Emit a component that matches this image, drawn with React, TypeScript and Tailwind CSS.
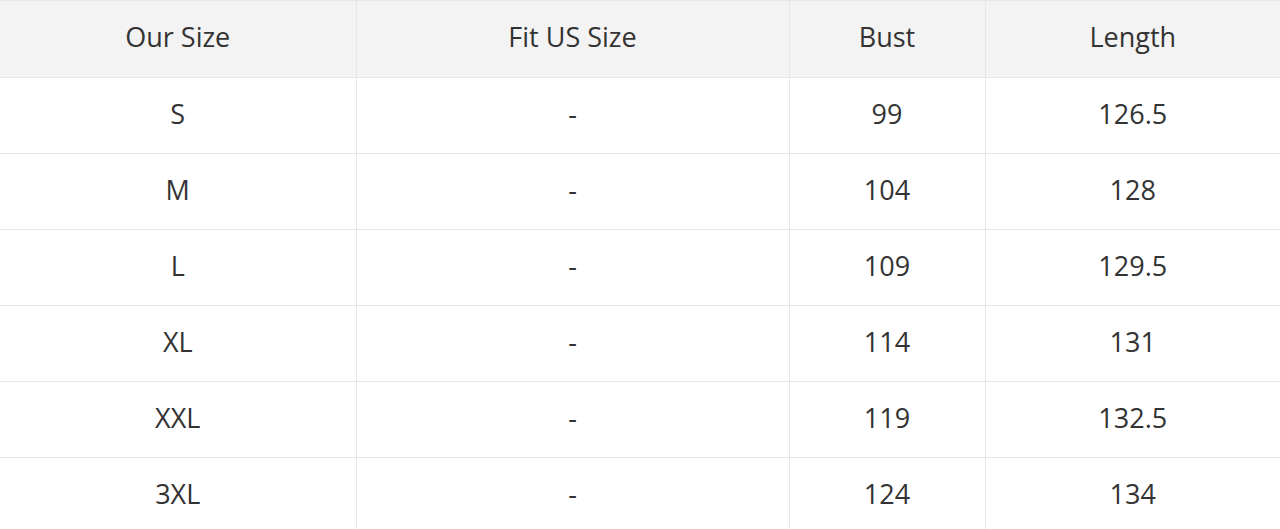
const rows = [
  ['S', '-', '99', '126.5'],
  ['M', '-', '104', '128'],
  ['L', '-', '109', '129.5'],
  ['XL', '-', '114', '131'],
  ['XXL', '-', '119', '132.5'],
  ['3XL', '-', '124', '134'],
];

const headers = ['Our Size', 'Fit US Size', 'Bust', 'Length'];

export default function App() {
  return (
    <div className="w-[1280px] h-[529px] overflow-hidden bg-white font-['Open_Sans',sans-serif] text-[27px] text-[#333]">
      <table className="w-full border-collapse table-fixed">
        <colgroup>
          <col className="w-[356px]" />
          <col className="w-[433px]" />
          <col className="w-[196px]" />
          <col className="w-[295px]" />
        </colgroup>
        <thead>
          <tr className="h-[77px] bg-[#f3f3f3] border-t border-[#e6e6e6]">
            {headers.map((h, i) => (
              <th
                key={h}
                className={`font-normal text-center pb-[3px] ${i > 0 ? 'border-l border-[#e6e6e6]' : ''}`}
              >
                {h}
              </th>
            ))}
          </tr>
        </thead>
        <tbody>
          {rows.map((r) => (
            <tr key={r[0]} className="h-[76px] border-t border-[#e6e6e6]">
              {r.map((c, i) => (
                <td
                  key={i}
                  className={`text-center pb-[3px] ${i > 0 ? 'border-l border-[#e6e6e6]' : ''}`}
                >
                  {c}
                </td>
              ))}
            </tr>
          ))}
        </tbody>
      </table>
    </div>
  );
}
